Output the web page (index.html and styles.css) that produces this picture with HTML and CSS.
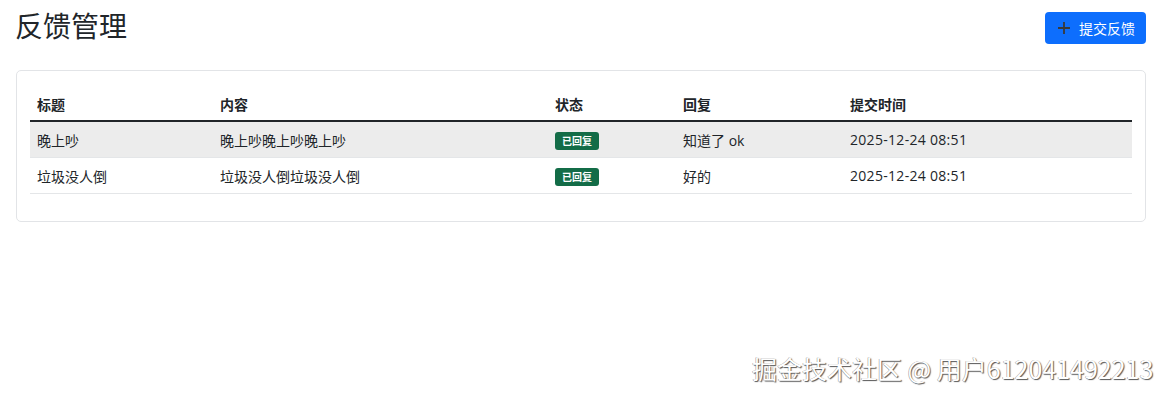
FILE: index.html
```html
<!DOCTYPE html>
<html lang="zh">
<head>
<meta charset="utf-8">
<link rel="stylesheet" href="styles.css">
</head>
<body>
<div class="page">
  <header class="topbar">
    <h1 class="title">反馈管理</h1>
    <button class="btn-primary">
      <svg class="plus" width="14" height="14" viewBox="0 0 14 14"><path d="M7 1v12M1 7h12" stroke="currentColor" stroke-width="1.8" fill="none"/></svg>
      <span>提交反馈</span>
    </button>
  </header>
  <section class="card">
    <table class="table">
      <colgroup>
        <col style="width:183px"><col style="width:335px"><col style="width:128px"><col style="width:167px"><col>
      </colgroup>
      <thead>
        <tr><th>标题</th><th>内容</th><th>状态</th><th>回复</th><th>提交时间</th></tr>
      </thead>
      <tbody>
        <tr class="hover"><td>晚上吵</td><td>晚上吵晚上吵晚上吵</td><td><span class="badge">已回复</span></td><td>知道了 ok</td><td class="date">2025-12-24 08:51</td></tr>
        <tr><td>垃圾没人倒</td><td>垃圾没人倒垃圾没人倒</td><td><span class="badge">已回复</span></td><td>好的</td><td class="date">2025-12-24 08:51</td></tr>
      </tbody>
    </table>
  </section>
  <div class="watermark">掘金技术社区 @ 用户612041492213</div>
</div>
</body>
</html>
```

FILE: styles.css
```css
html, body {
  margin: 0;
  padding: 0;
  background: #fff;
}
body {
  font-family: "Open Sans", "Noto Sans CJK SC", sans-serif;
  color: #212529;
  font-size: 14px;
}
.page {
  position: relative;
  width: 1169px;
  height: 401px;
  padding: 0 23px 0 16px;
  box-sizing: border-box;
}
.topbar {
  display: flex;
  justify-content: space-between;
  align-items: flex-start;
  height: 70px;
}
.title {
  margin: 5px 0 0 -1px;
  font-family: "Noto Sans CJK SC", sans-serif;
  font-size: 28px;
  font-weight: 400;
  line-height: 40px;
  color: #212529;
}
.btn-primary {
  margin-top: 12px;
  margin-right: 0;
  height: 32px;
  padding: 0 11px 0 12px;
  display: flex;
  align-items: center;
  gap: 8px;
  background: #0d6efd;
  color: #fff;
  border: none;
  border-radius: 4px;
  font-family: "Noto Sans CJK SC", sans-serif;
  font-size: 14px;
}
.plus {
  color: #3a3a3a;
}
.card {
  border: 1px solid #e2e4e7;
  border-radius: 5px;
  padding: 16px 13px 27px 13px;
}
.table {
  width: 100%;
  border-collapse: collapse;
  table-layout: fixed;
}
.table th {
  text-align: left;
  font-family: "Noto Sans CJK SC", sans-serif;
  font-weight: 700;
  font-size: 14px;
  height: 33px;
  padding: 0 7px;
  border-bottom: 2px solid #212529;
  vertical-align: middle;
}
.table td {
  padding: 0 7px;
  height: 35px;
  border-bottom: 1px solid #e4e6e8;
  vertical-align: middle;
  color: #212529;
}
.table td.date {
  letter-spacing: 0.3px;
}
.table tr.hover td {
  background: #ececec;
}
.badge {
  display: inline-block;
  box-sizing: border-box;
  height: 18px;
  background: #136c47;
  color: #fff;
  font-size: 10px;
  font-weight: 700;
  line-height: 18px;
  padding: 0 7px;
  border-radius: 3px;
  font-family: "Noto Sans CJK SC", sans-serif;
  vertical-align: middle;
}
.watermark {
  position: absolute;
  left: 752px;
  top: 350px;
  font-family: "Noto Sans CJK SC", sans-serif;
  font-size: 25px;
  color: #fff;
  text-shadow: 1px 1px 1px #555, -0.5px -0.5px 0 #999;
  white-space: nowrap;
}
```
